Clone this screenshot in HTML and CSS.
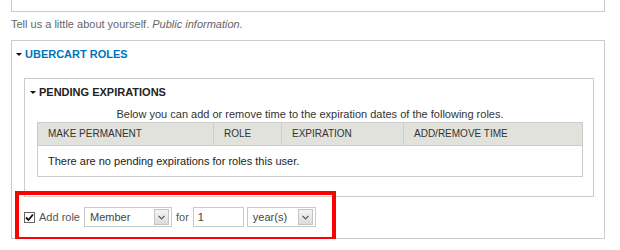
FILE: index.html
```html
<!DOCTYPE html>
<html lang="en">
<head>
    <meta charset="UTF-8">
    <title>Ubercart roles</title>
    <link rel="stylesheet" href="styles.css">
</head>
<body>
    <div class="page">
        <div class="prev-box"></div>
        <div class="description">Tell us a little about yourself. <em>Public information.</em></div>

        <div class="fieldset">
            <div class="legend legend-link"><span class="arrow"></span>UBERCART ROLES</div>

            <div class="fieldset inner">
                <div class="legend"><span class="arrow"></span>PENDING EXPIRATIONS</div>
                <p class="help">Below you can add or remove time to the expiration dates of the following roles.</p>
                <table class="roles">
                    <thead>
                        <tr>
                            <th class="col-perm">MAKE PERMANENT</th>
                            <th class="col-role">ROLE</th>
                            <th class="col-exp">EXPIRATION</th>
                            <th>ADD/REMOVE TIME</th>
                        </tr>
                    </thead>
                    <tbody>
                        <tr>
                            <td colspan="4">There are no pending expirations for roles this user.</td>
                        </tr>
                    </tbody>
                </table>
            </div>

            <div class="add-role">
                <label class="check"><span class="box"><svg width="9" height="9" viewBox="0 0 9 9"><path d="M1 4.5 L3.5 7 L8 1.5" fill="none" stroke="#111" stroke-width="1.8"/></svg></span>Add role</label>
                <div class="select select-role"><span>Member</span><span class="drop"><svg width="7" height="5" viewBox="0 0 7 5"><path d="M0.5 0.8 L3.5 3.8 L6.5 0.8" fill="none" stroke="#555" stroke-width="1.2"/></svg></span></div>
                <span class="word">for</span>
                <div class="text-input">1</div>
                <div class="select select-unit"><span>year(s)</span><span class="drop"><svg width="7" height="5" viewBox="0 0 7 5"><path d="M0.5 0.8 L3.5 3.8 L6.5 0.8" fill="none" stroke="#555" stroke-width="1.2"/></svg></span></div>
            </div>
        </div>

        <div class="highlight"></div>
    </div>
</body>
</html>
```

FILE: styles.css
```css
body {
    margin: 0;
    font-family: "Liberation Sans", Arial, sans-serif;
    font-size: 11px;
    line-height: 14px;
    color: #333;
    background: #fff;
}

.page {
    position: relative;
    padding: 0 15px 0 11px;
}

.prev-box {
    height: 11px;
    border: 1px solid #ccc;
    border-top: 0;
}

.description {
    margin-top: 5px;
    color: #666;
}

.fieldset {
    margin-top: 9px;
    border: 1px solid #ccc;
    padding: 6px 10px 11px 12px;
}

.fieldset.inner {
    margin-top: 17px;
    padding: 6px 10px 19px 12px;
}

.legend {
    display: flex;
    align-items: center;
    font-weight: bold;
    color: #222;
}

.inner .legend {
    margin-left: -7px;
}

.legend-link {
    color: #0074bd;
    margin-left: -8px;
}

.arrow {
    width: 0;
    height: 0;
    border-left: 3px solid transparent;
    border-right: 3px solid transparent;
    border-top: 3px solid #111;
    margin-right: 3px;
}

.help {
    margin: 8px 0 1px;
    text-align: center;
}

.roles {
    width: 546px;
    border-collapse: collapse;
    border: 1px solid #ccc;
}

.roles th {
    background: #e1e2dc;
    font-weight: normal;
    font-size: 10px;
    text-align: left;
    height: 22px;
    padding: 0 10px;
    border-left: 1px solid #cdcdc7;
    border-bottom: 1px solid #cdcdc7;
    color: #333;
}

.roles th:first-child {
    border-left: 0;
}

.col-perm {
    width: 155px;
}

.col-role {
    width: 47px;
}

.col-exp {
    width: 101px;
}

.roles td {
    height: 30px;
    padding: 0 10px;
    color: #222;
}

.add-role {
    display: flex;
    align-items: center;
    margin-top: 10px;
    height: 20px;
    color: #555;
}

.check {
    display: flex;
    align-items: center;
}

.box {
    display: flex;
    align-items: center;
    justify-content: center;
    width: 9px;
    height: 9px;
    border: 1px solid #666;
    margin-right: 4px;
    background: #fff;
}

.select {
    display: flex;
    align-items: center;
    justify-content: space-between;
    height: 20px;
    box-sizing: border-box;
    border: 1px solid #c9c9c9;
    padding: 0 2px 0 5px;
    color: #444;
    background: #fff;
}

.select-role {
    width: 88px;
    margin-left: 4px;
}

.select-unit {
    width: 69px;
    margin-left: 3px;
}

.drop {
    display: flex;
    align-items: center;
    justify-content: center;
    width: 13px;
    height: 14px;
    border: 1px solid #c4c4c4;
    background: linear-gradient(#f4f4f4, #dcdcdc);
}

.word {
    margin: 0 4px;
}

.text-input {
    width: 51px;
    height: 20px;
    box-sizing: border-box;
    border: 1px solid #c9c9c9;
    padding: 0 4px;
    line-height: 18px;
    color: #444;
}

.highlight {
    position: absolute;
    left: 15px;
    top: 191px;
    width: 321px;
    height: 50px;
    box-sizing: border-box;
    border: 4px solid #f00;
}
```
